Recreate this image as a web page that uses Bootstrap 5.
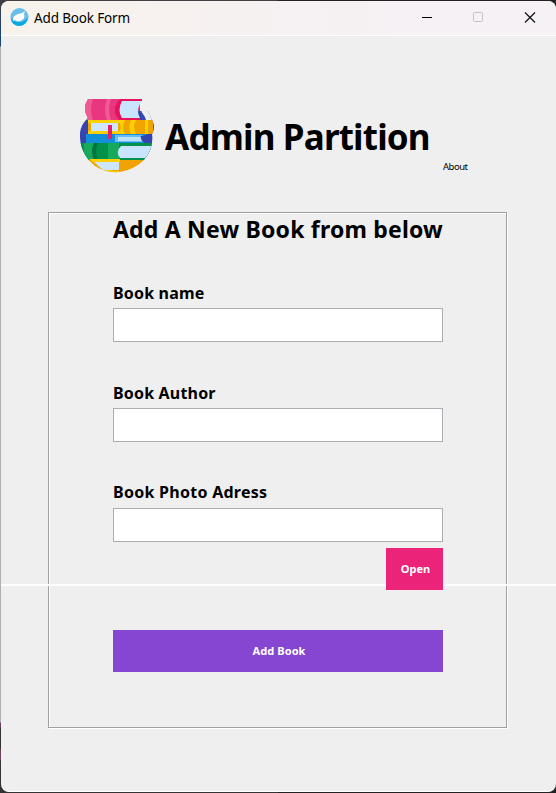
<!DOCTYPE html>
<html lang="en">
<head>
<meta charset="utf-8">
<meta name="viewport" content="width=device-width, initial-scale=1">
<title>Add Book Form</title>
<link href="https://cdn.jsdelivr.net/npm/bootstrap@5.3.0/dist/css/bootstrap.min.css" rel="stylesheet">
<style>
body{background:linear-gradient(#404044 0 2px,#1f4470 30px 46px,#b0b0b0 47px 722px,#6b4560 723px 727px,#333 728px 748px,#6b4560 750px 759px,#333 761px);height:793px;overflow:hidden;font-family:"Noto Sans","Open Sans",sans-serif;color:#000}
.corners{background:linear-gradient(90deg,transparent 0 50%,#222 50%);height:793px;padding:1px 0 1px 1px}
.app-window{height:791px;background:#efefef;border-radius:8px;overflow:hidden;border-bottom:1px solid #fff}
.titlebar{height:35px;background:linear-gradient(90deg,#f8f2ec,#f5f1f4 70%);border-bottom:1px solid #fff}
.caption{font-size:13.5px;line-height:20px;letter-spacing:-.15px;margin-left:5px}
.brand-row{height:176px;padding:63px 0 0 79px}
.brand-title{font-size:35px;line-height:48px;letter-spacing:-.82px;margin:14px 0 0 10px;width:268px;white-space:nowrap}
.about{font-size:9.5px;line-height:14px;letter-spacing:-.5px;color:#000;margin:61px 0 0 10px}
.frame{width:459px;height:516px;margin-left:47px;border:1px solid #a0a0a0;box-shadow:1px 1px 0 #fff,inset 1px 1px 0 #fff;padding:0 63px 0 64px}
.frame-title{font-size:23px;line-height:32px;letter-spacing:.2px;white-space:nowrap;margin-bottom:37px}
.field-label{font-size:16px;line-height:22px;letter-spacing:.18px}
.photo-label{letter-spacing:.27px;position:relative;top:-1px}
.field{height:34px;border-color:#abadb3;margin-top:4px}
.group+.group{margin-top:40px}
.action{height:42px;font-size:11px;line-height:16px;color:#fff;border:0;position:relative;z-index:2}
.open-btn{width:57px;background:#ec2479;margin-top:6px;padding:0 0 0 2px}
.add-btn{background:#8646d2;margin-top:40px;letter-spacing:.1px;padding:0 0 0 2px}
.seam{position:absolute;left:1px;right:0;top:584px;height:2px;background:#fff;z-index:1}
</style>
<script src="https://cdn.jsdelivr.net/npm/bootstrap@5.3.0/dist/js/bootstrap.bundle.min.js"></script>
</head>
<body class="position-relative">
<div class="corners">
<main class="app-window">
<header class="titlebar d-flex align-items-center">
<svg class="ms-2" width="20" height="20" viewBox="0 0 20 20"><circle cx="10.500" cy="9" r="9" fill="#67bfea"/><path d="M1.500 10Q3 18 10.500 18Q17 17 19 10Q15 13 12 14Q6 15 1.500 10" fill="#09a9e0"/><path d="M4 13Q3 8 9 6Q13 6 16 3L15 6Q17 11 11 13Q8 14 6 12Z" fill="#fff"/></svg>
<span class="caption">Add Book Form</span>
<svg class="ms-auto" width="136" height="34" viewBox="0 0 136 34"><path d="M2 16.500h10" stroke="#000"/><rect x="53.500" y="11.500" width="9" height="9" rx="1" fill="none" stroke="#c6c1c4"/><path d="M105 11.500l10 10m0-10l-10 10" stroke="#111" stroke-width="1.200"/></svg>
</header>
<section class="brand-row d-flex align-items-start">
<svg width="75" height="75" viewBox="0 0 75 75">
<defs><clipPath id="disc"><path d="M8 0H62Q68 11 72 21Q76 28 72 35Q74 54 58 66Q36 80 15 67Q-1 54 0 34Q1 25 8 19Q2 9 8 0Z"/></clipPath></defs>
<g clip-path="url(#disc)"><path fill="#3445b0" d="M0 12h75v50H0z"/>
<path fill="#e8377f" d="M4 0h56v21H8Q0 10 6 0z"/><path fill="#ef5b91" d="M6 0h7q-4 10 0 21H7Q1 10 6 0z"/><path fill="#f05b94" d="M27 0h4q-4 10 0 21h-4q-4-11 0-21z"/>
<path fill="#efefef" d="M58 0h17v21H64z"/><path fill="#3445b0" d="M58 11q6 3 8 10h-8z"/>
<path fill="#e6135b" d="M40 0h22v2H43q-6 9 0 17h17v2H39q-9-11 1-21z"/><path fill="#c8e5fd" d="M42 2h20q-7 8-2 17H42q-5-8 0-17z"/>
<path fill="#f0a400" d="M8 21h65v14H8z"/><path fill="#ffd000" d="M8 21h35v3H8zM8 32h33v3H8zM39 21h6q-4 7 0 14h-6q3-7 0-14zM51 21h5q-4 7 0 14h-5q-3-7 0-14zM65 21h3v14h-3z"/><path fill="#cce7fc" d="M11 24h27v8H11z"/>
<path fill="#128fd6" d="M6 35h60v9H6z"/><path fill="#64bdf5" d="M35 36h28v7H35z"/><path fill="#bee2fc" d="M38 38h24v4H38z"/><path fill="#3445b0" d="M61 37l14-3v10H64q-4-3-3-7z"/>
<path fill="#049149" d="M0 44h75v17H0z"/><path fill="#17a95c" d="M4 44h10v17H4zM28 44h11v17H28z"/><path fill="#00733f" d="M14 44h4q-4 8 0 17h-4q-4-9 0-17z"/><path fill="#c8e5fd" d="M41 47h33v12H40q-5-6 1-12z"/>
<path fill="#f0a300" d="M7 61h63v14H7z"/><path fill="#ffd000" d="M9 60h31v3H13q8 8 22 9h4v3H30z"/><path fill="#cce7fc" d="M14 63h25v8H23z"/><path fill="#e51d6e" d="M28 26h4v15l-2-2-2 2z"/></g></svg>
<h1 class="brand-title fw-bold">Admin Partition</h1>
<a class="about text-decoration-none" href="#">About</a>
</section>
<form class="frame">
<h2 class="frame-title fw-bold">Add A New Book from below</h2>
<div class="group"><label class="field-label fw-bold d-block" for="bookName">Book name</label><input class="field form-control rounded-0 shadow-none" id="bookName"></div>
<div class="group"><label class="field-label fw-bold d-block" for="bookAuthor">Book Author</label><input class="field form-control rounded-0 shadow-none" id="bookAuthor"></div>
<div class="group"><label class="field-label photo-label fw-bold d-block" for="bookPhoto">Book Photo Adress</label><input class="field form-control rounded-0 shadow-none" id="bookPhoto"></div>
<div class="d-flex justify-content-end"><button type="button" class="btn action open-btn rounded-0 fw-bold">Open</button></div>
<button type="button" class="btn action add-btn rounded-0 fw-bold w-100">Add Book</button>
</form>
</main>
</div>
<div class="seam"></div>
</body>
</html>
